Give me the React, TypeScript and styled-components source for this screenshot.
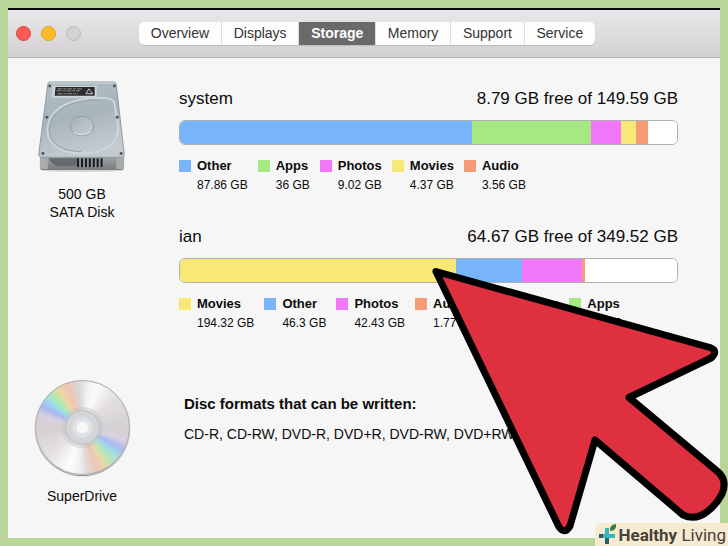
import React from "react";
import styled, { createGlobalStyle } from "styled-components";

const GlobalStyle = createGlobalStyle`
  * { box-sizing: border-box; }
  html, body, #root { height: 100%; }
  body {
    margin: 0;
    background: #bad59a;
    color: #0c0c0c;
    font-family: "Liberation Sans", Arial, sans-serif;
  }
`;

const Page = styled.div`
  position: relative;
  min-height: 100vh;
  padding: 8px;
  display: flex;
  overflow: hidden;
`;

const Window = styled.main`
  flex: 1;
  display: flex;
  flex-direction: column;
  border-top: 2px solid #0d0b10;
  background: #f6f6f6;
`;

const TitleBar = styled.header`
  display: grid;
  grid-template-columns: 131px minmax(auto, 456px) 1fr;
  align-items: center;
  height: 48px;
  border-bottom: 1px solid #b3b1b3;
  background: linear-gradient(#ebe8ec, #d2d0d3);
`;

const Lights = styled.div`
  display: flex;
  gap: 10px;
  padding-left: 8px;
`;

const Light = styled.button<{ $fill: string; $edge: string }>`
  width: 15px;
  height: 15px;
  padding: 0;
  border: 1px solid ${(p) => p.$edge};
  border-radius: 50%;
  background: ${(p) => p.$fill};
`;

const Tabs = styled.nav`
  display: flex;
  overflow: hidden;
  border-radius: 5px;
  background: #fdfdfd;
  box-shadow: 0 1px 1px #bcbabd;
`;

const Tab = styled.button<{ $active?: boolean }>`
  flex: 1 1 auto;
  height: 23px;
  padding: 0 11px;
  border: 0;
  border-left: 1px solid #dddcde;
  background: ${(p) => (p.$active ? "#6b6a6b" : "transparent")};
  color: ${(p) => (p.$active ? "#fff" : "#333")};
  font: ${(p) => (p.$active ? "bold" : "normal")} 14px/23px "Liberation Sans", Arial, sans-serif;
  white-space: nowrap;
  &:first-child { border-left: 0; }
`;

const Content = styled.div`
  display: flex;
  flex-direction: column;
`;

const Row = styled.section`
  display: grid;
  grid-template-columns: 148px minmax(0, 1fr);
  column-gap: 23px;
  padding-right: 42px;
`;

const StorageRow = styled(Row)`
  padding-top: 23px;
`;

const DriveRow = styled(Row)`
  padding-top: 49px;
`;

const Device = styled.div`
  display: flex;
  flex-direction: column;
  align-items: center;
  font-size: 14px;
  line-height: 18px;
  text-align: center;
`;

const DeviceName = styled.div`
  margin-top: 12px;
`;

const Volumes = styled.div`
  display: flex;
  flex-direction: column;
  gap: 34px;
  padding-top: 8px;
`;

const VolumeHead = styled.div`
  display: flex;
  justify-content: space-between;
  font-size: 17px;
  line-height: 20px;
`;

const VolumeName = styled.h2`
  margin: 0;
  font-size: 17px;
  font-weight: normal;
`;

const Bar = styled.div`
  display: flex;
  height: 25px;
  margin-top: 11px;
  overflow: hidden;
  border: 1px solid #b0b0b4;
  border-radius: 6px;
  background: #fff;
`;

const Segment = styled.div<{ $color: string; $size: number }>`
  flex: ${(p) => p.$size} 0 0;
  background: ${(p) => p.$color};
`;

const Legend = styled.ul`
  display: flex;
  gap: 10px;
  margin: 12px 0 0;
  padding: 0;
  list-style: none;
  white-space: nowrap;
`;

const LegendItem = styled.li`
  display: grid;
  grid-template-columns: 12px auto;
  column-gap: 6px;
`;

const Swatch = styled.span<{ $color: string }>`
  width: 12px;
  height: 12px;
  margin-top: 3px;
  background: ${(p) => p.$color};
`;

const LegendName = styled.strong`
  font-size: 13px;
  line-height: 17px;
`;

const LegendSize = styled.span`
  grid-column: 2;
  padding-top: 3px;
  font-size: 12px;
  line-height: 16px;
`;

const Formats = styled.div`
  padding: 15px 0 0 5px;
  white-space: nowrap;
`;

const FormatsTitle = styled.h3`
  margin: 0;
  font-size: 15px;
  line-height: 18px;
`;

const FormatsList = styled.p`
  margin: 12px 0 0;
  font-size: 14px;
  line-height: 18px;
`;

const Pointer = styled.svg`
  position: absolute;
  left: 420px;
  top: 250px;
  width: 308px;
  height: 296px;
  pointer-events: none;
`;

const Brand = styled.a`
  position: absolute;
  right: 0;
  bottom: 0;
  display: flex;
  align-items: center;
  gap: 2px;
  height: 23px;
  padding: 0 2px 0 3px;
  border-radius: 7px 0 0 0;
  background: #f6ead0;
  color: #46413a;
  font: 17px/22px Roboto, "Liberation Sans", sans-serif;
  text-decoration: none;
`;

const BLUE = "#78b4fa";
const GREEN = "#a5ea80";
const PINK = "#f277f8";
const YELLOW = "#f8e977";
const ORANGE = "#f79b76";

type Item = { name: string; size: string; amount: number; color: string };
type Volume = { name: string; summary: string; free: number; items: Item[] };

const volumes: Volume[] = [
  {
    name: "system",
    summary: "8.79 GB free of 149.59 GB",
    free: 8.79,
    items: [
      { name: "Other", size: "87.86 GB", amount: 87.86, color: BLUE },
      { name: "Apps", size: "36 GB", amount: 36, color: GREEN },
      { name: "Photos", size: "9.02 GB", amount: 9.02, color: PINK },
      { name: "Movies", size: "4.37 GB", amount: 4.37, color: YELLOW },
      { name: "Audio", size: "3.56 GB", amount: 3.56, color: ORANGE },
    ],
  },
  {
    name: "ian",
    summary: "64.67 GB free of 349.52 GB",
    free: 64.67,
    items: [
      { name: "Movies", size: "194.32 GB", amount: 194.32, color: YELLOW },
      { name: "Other", size: "46.3 GB", amount: 46.3, color: BLUE },
      { name: "Photos", size: "42.43 GB", amount: 42.43, color: PINK },
      { name: "Audio", size: "1.77 GB", amount: 1.77, color: ORANGE },
      { name: "Backups", size: "Zero KB", amount: 0, color: "#b58cf0" },
      { name: "Apps", size: "30 MB", amount: 0.03, color: GREEN },
    ],
  },
];

const tabs = ["Overview", "Displays", "Storage", "Memory", "Support", "Service"];

function HardDisk() {
  return (
    <svg width="90" height="92" viewBox="0 0 92 94" role="img" aria-label="Hard disk">
      <defs>
        <linearGradient id="lid" x1="0" y1="0" x2="0.3" y2="1">
          <stop offset="0" stopColor="#b2bec5" />
          <stop offset="0.55" stopColor="#a8b4bb" />
          <stop offset="1" stopColor="#c3cbd0" />
        </linearGradient>
        <linearGradient id="front" x1="0" y1="0" x2="0" y2="1">
          <stop offset="0" stopColor="#a3a7a9" />
          <stop offset="1" stopColor="#777b7d" />
        </linearGradient>
        <linearGradient id="platter" x1="0" y1="0" x2="1" y2="1">
          <stop offset="0" stopColor="#a2afb6" />
          <stop offset="1" stopColor="#c9d0d4" />
        </linearGradient>
      </defs>
      <ellipse cx="46" cy="91" rx="43" ry="2" fill="#d4d4d4" />
      <path d="M3 76h86v12q0 3-3 3H6q-3 0-3-3z" fill="url(#front)" />
      <path d="M12 79h29v8H22q-7-1-10-8z" fill="#666a6c" />
      <path d="M3 78h8v12H6q-3 0-3-3zM81 78h8v9q0 3-3 3h-5z" fill="#a9acad" />
      <path d="M11 4q0-3 3-3h64q3 0 3 3l8 69q1 5-3 5H5q-4 0-3-5z" fill="url(#lid)" stroke="#8b989f" />
      <path d="M12 3q1-1 3-1h62q2 0 3 1" fill="none" stroke="#d6dee2" />
      <path d="M64 17C35 18 14 27 11 46c-3 18 12 28 34 28 24 0 39-9 38-27L79 22c-1-4-7-5-15-5z" fill="none" stroke="#cdd6da" strokeWidth="2" />
      <path d="M61 19C35 20 16 29 13 46c-3 16 11 26 32 26" fill="none" stroke="#93a0a7" />
      <ellipse cx="46" cy="46" rx="12" ry="10" fill="url(#platter)" stroke="#909da4" />
      <path d="M37 52q9 6 18 0" fill="none" stroke="#e0e5e8" />
      <path d="M16 5h45v12H15z" fill="#cdd5d9" />
      <path d="M19 6h40v9H18z" fill="#2b2c2e" />
      <path d="M21 8h26M20 10h24M21 13h21" stroke="#8f8f8f" strokeDasharray="5 1 3 1" />
      <path d="M53 8l-3 5h7z" fill="none" stroke="#ccc" />
      <path d="M41 79h26v9H41z" fill="#8e9294" />
      {[41, 45, 49, 53, 57, 61, 65].map((x) => (
        <rect key={x} x={x} y="79" width="2" height="9" fill="#17181a" />
      ))}
      {[[13, 5], [79, 5], [10, 37], [82, 37], [6, 74], [86, 74]].map(([x, y]) => (
        <circle key={x + "-" + y} cx={x} cy={y} r="1.5" fill="#4b555a" />
      ))}
    </svg>
  );
}

const Disc = styled.div`
  width: 95px;
  height: 95px;
  border: 1px solid #a9a9ab;
  border-radius: 50%;
  background: conic-gradient(
    from 8deg,
    #f2f2f2 0deg, #fafafa 12deg, #e2dede 40deg, #d4d1d2 80deg, #d9d2e2 99deg, #acb9f2 110deg,
    #a0d9e9 120deg, #b4e6bd 130deg, #e9d9a9 142deg, #edc6b6 153deg, #dfdad8 166deg,
    #f2f2f2 178deg, #fcfcfc 192deg, #e6e2e2 220deg, #d4d0d1 262deg, #d7d1e2 278deg,
    #a9b5f1 290deg, #9addeb 300deg, #b1eab0 310deg, #eed6a3 321deg, #efc4b4 332deg,
    #dad5d5 346deg, #f2f2f2 360deg
  );
  box-shadow: 0 1px 1px #8b8b8d;
`;

const DiscHub = styled.svg`
  display: block;
  width: 100%;
  height: 100%;
`;

export default function App() {
  return (
    <>
      <GlobalStyle />
      <Page>
        <Window>
          <TitleBar>
            <Lights>
              <Light aria-label="Close" $fill="#fb5a55" $edge="#e0423f" />
              <Light aria-label="Minimize" $fill="#fdbb2a" $edge="#dfa023" />
              <Light aria-label="Zoom" $fill="#d3d1d4" $edge="#bdbbbe" />
            </Lights>
            <Tabs>
              {tabs.map((t) => (
                <Tab key={t} $active={t === "Storage"}>{t}</Tab>
              ))}
            </Tabs>
          </TitleBar>
          <Content>
            <StorageRow>
              <Device>
                <HardDisk />
                <DeviceName>500 GB<br />SATA Disk</DeviceName>
              </Device>
              <Volumes>
                {volumes.map((v) => (
                  <div key={v.name}>
                    <VolumeHead>
                      <VolumeName>{v.name}</VolumeName>
                      <span>{v.summary}</span>
                    </VolumeHead>
                    <Bar>
                      {v.items.map((i) => (
                        <Segment key={i.name} $color={i.color} $size={i.amount} />
                      ))}
                      <Segment $color="#fff" $size={v.free} />
                    </Bar>
                    <Legend>
                      {v.items.map((i) => (
                        <LegendItem key={i.name}>
                          <Swatch $color={i.color} />
                          <LegendName>{i.name}</LegendName>
                          <LegendSize>{i.size}</LegendSize>
                        </LegendItem>
                      ))}
                    </Legend>
                  </div>
                ))}
              </Volumes>
            </StorageRow>
            <DriveRow>
              <Device>
                <Disc>
                  <DiscHub viewBox="0 0 94 94" aria-hidden="true">
                    <circle cx="47" cy="47" r="21" fill="#c4c4c6" fillOpacity="0.45" />
                    <circle cx="47" cy="47" r="17" fill="#d3d6d8" stroke="#bbbdc0" strokeWidth="1" />
                    <circle cx="47" cy="47" r="11" fill="#dfe1e3" stroke="#cfd2d5" />
                    <circle cx="47" cy="47" r="6" fill="#f7f7f7" stroke="#e9eaeb" />
                  </DiscHub>
                </Disc>
                <DeviceName>SuperDrive</DeviceName>
              </Device>
              <Formats>
                <FormatsTitle>Disc formats that can be written:</FormatsTitle>
                <FormatsList>CD-R, CD-RW, DVD-R, DVD+R, DVD-RW, DVD+RW</FormatsList>
              </Formats>
            </DriveRow>
          </Content>
        </Window>
        <Pointer viewBox="420 250 308 296" aria-hidden="true">
          <path
            d="M436 271.500L710 347.500Q719 351 711 358L629 397.500L717 471Q728 480 722 494Q716 505 708 511Q696 521 683 515L595 440L570 526Q565 535 559 527Z"
            fill="#de303f"
            stroke="#000"
            strokeWidth="7"
            strokeLinejoin="round"
          />
        </Pointer>
        <Brand href="#">
          <svg width="19" height="22" viewBox="0 0 19 22" aria-hidden="true">
            <path d="M9 4v16M1 12h16" stroke="#28606c" strokeWidth="4" />
            <path d="M9 12h8M9 4v10M5 12h4" stroke="#3bb5bd" strokeWidth="4" />
            <path d="M12 7q-1-6 6-7 1 7-6 7z" fill="#3c7a35" />
          </svg>
          <span><b>Healthy</b> Living</span>
        </Brand>
      </Page>
    </>
  );
}
